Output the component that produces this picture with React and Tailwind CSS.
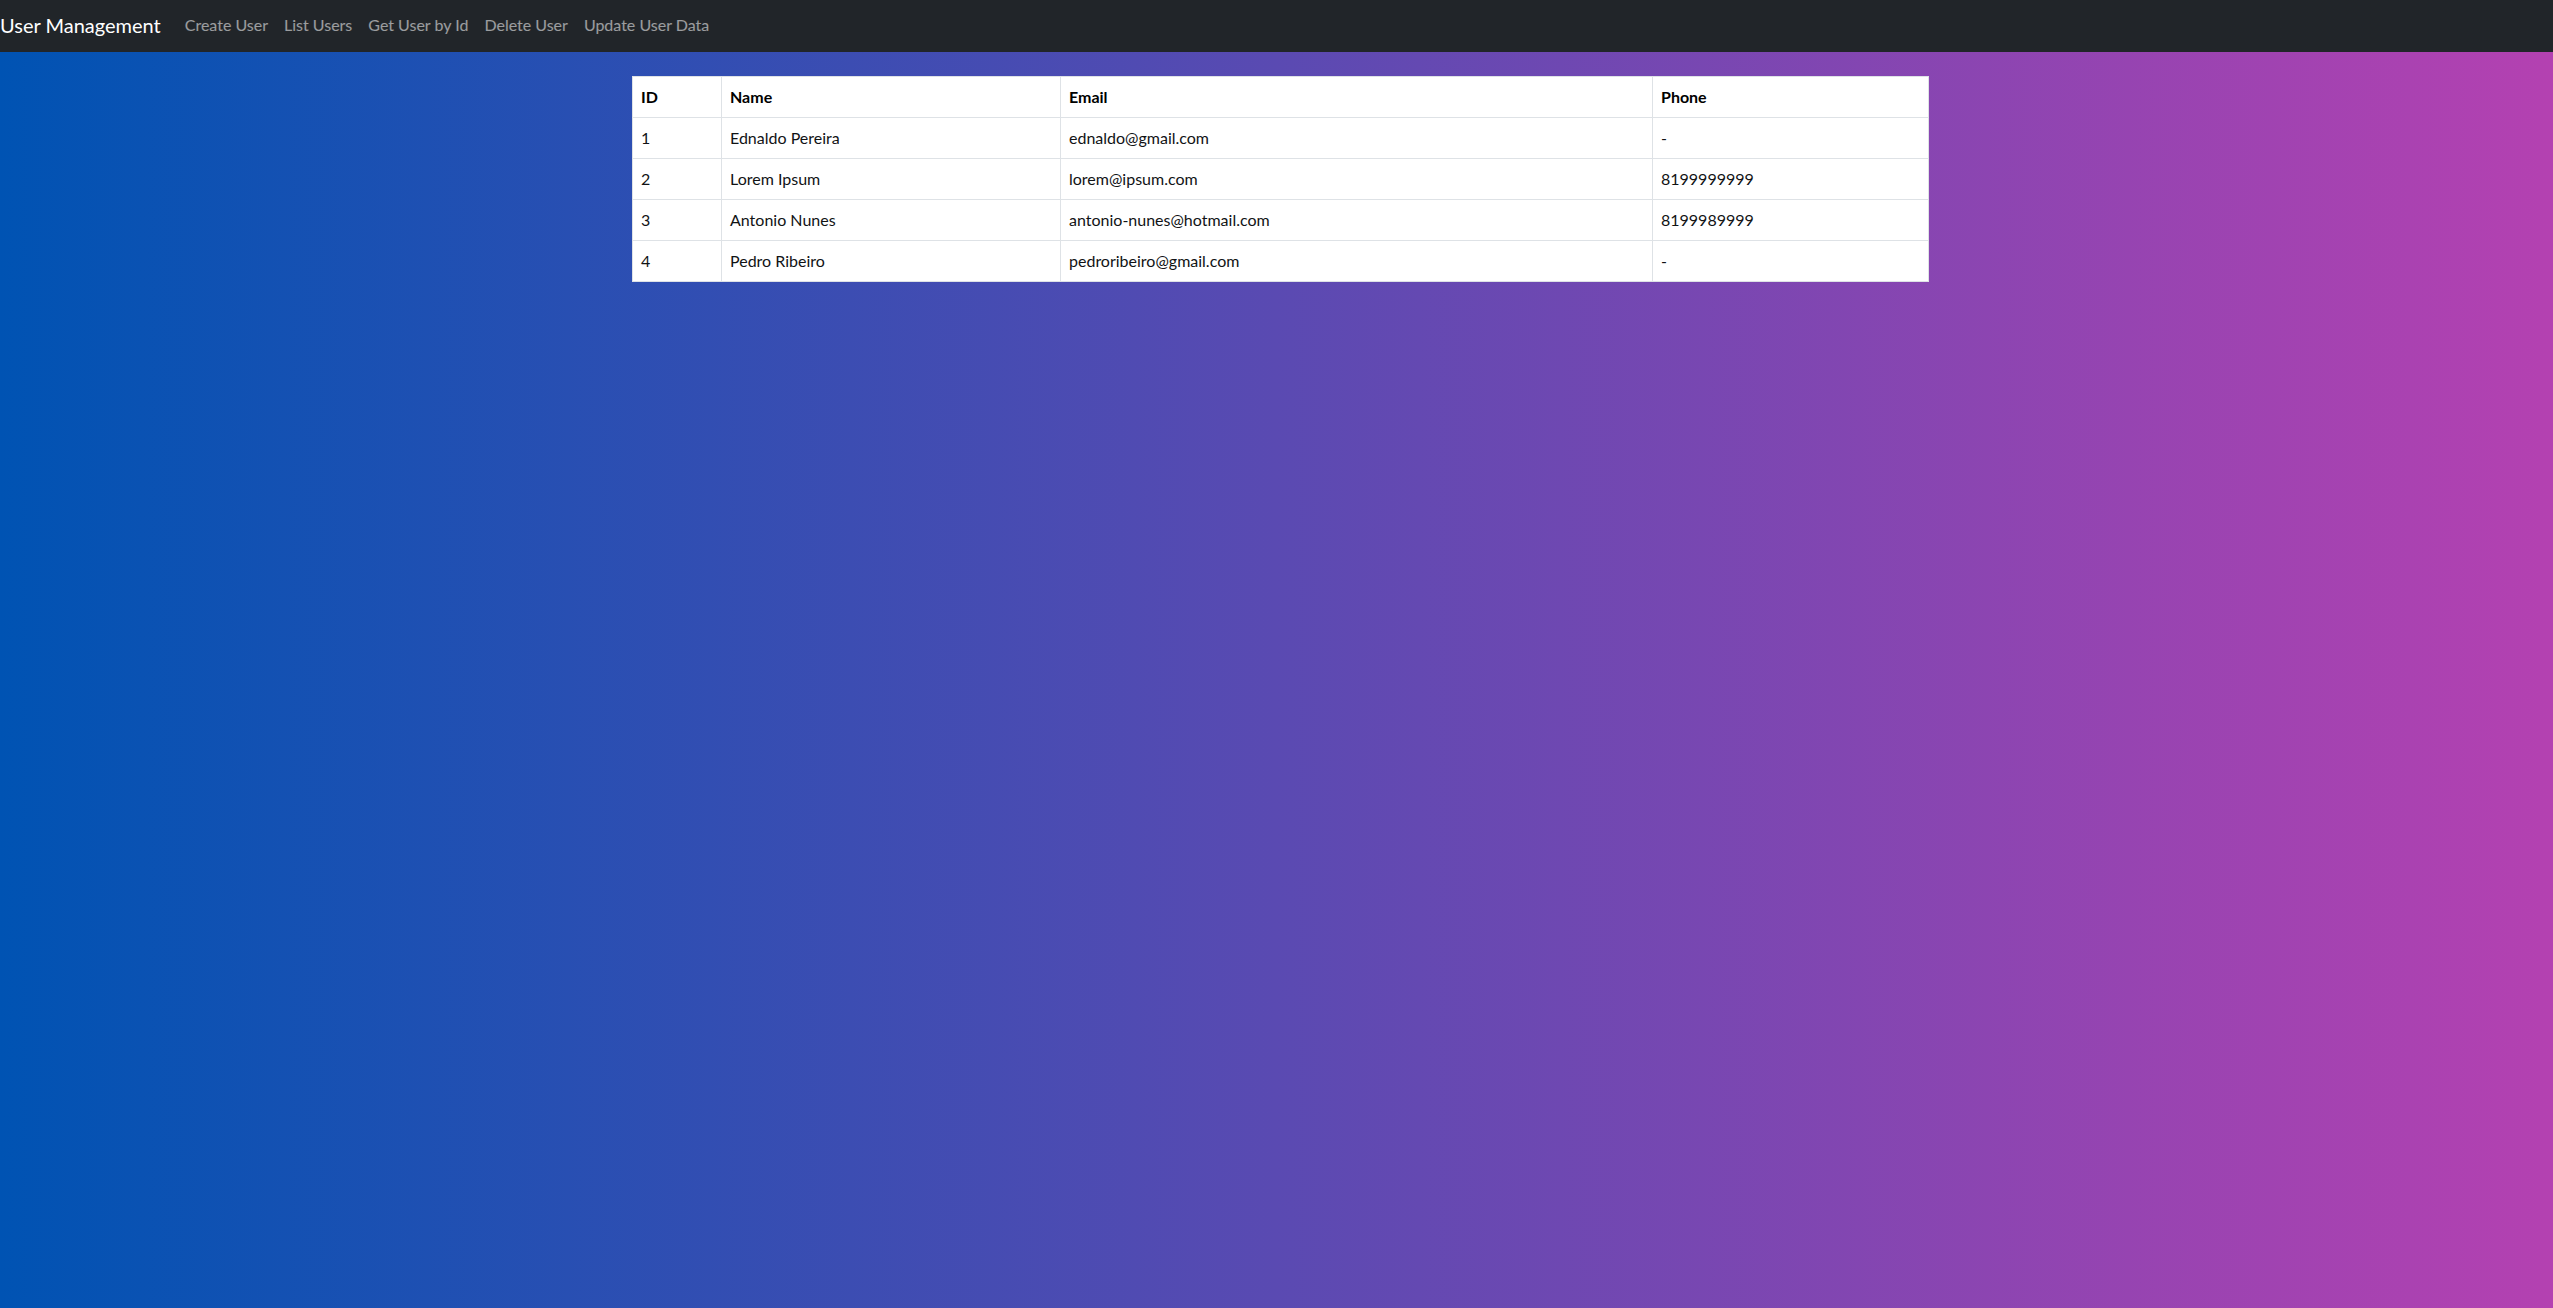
import React from 'react';

const links = ['Create User', 'List Users', 'Get User by Id', 'Delete User', 'Update User Data'];

const users = [
  { id: 1, name: 'Ednaldo Pereira', email: 'ednaldo@gmail.com', phone: '-' },
  { id: 2, name: 'Lorem Ipsum', email: 'lorem@ipsum.com', phone: '8199999999' },
  { id: 3, name: 'Antonio Nunes', email: 'antonio-nunes@hotmail.com', phone: '8199989999' },
  { id: 4, name: 'Pedro Ribeiro', email: 'pedroribeiro@gmail.com', phone: '-' },
];

const cell = 'border border-[#dee2e6] px-2 py-2 leading-6 text-left align-top';

const App = () => {
  return (
    <div className="min-h-screen flex flex-col bg-linear-to-r/srgb from-[#0053b3] to-[#b441b1] font-['Lato',sans-serif] text-[#111315]">
      {/* Navbar */}
      <nav className="h-[52px] bg-[#212529] flex items-center pb-[3px]">
        <span className="text-white text-[20px] mr-4 leading-[30px]">User Management</span>
        <ul className="flex">
          {links.map((l) => (
            <li key={l}>
              <a href="#" className="block px-2 text-[16px] leading-6 text-white/55">
                {l}
              </a>
            </li>
          ))}
        </ul>
      </nav>

      <div className="w-[1303px] mx-auto mt-6 pl-[7px]">
        <table className="w-full border-collapse bg-white text-[16px] table-fixed">
          <colgroup>
            <col className="w-[89px]" />
            <col className="w-[339px]" />
            <col className="w-[592px]" />
            <col className="w-[276px]" />
          </colgroup>
          <thead>
            <tr>
              <th className={`${cell} font-bold text-black`}>ID</th>
              <th className={`${cell} font-bold text-black`}>Name</th>
              <th className={`${cell} font-bold text-black`}>Email</th>
              <th className={`${cell} font-bold text-black`}>Phone</th>
            </tr>
          </thead>
          <tbody>
            {users.map((u) => (
              <tr key={u.id}>
                <td className={cell}>{u.id}</td>
                <td className={cell}>{u.name}</td>
                <td className={cell}>{u.email}</td>
                <td className={cell}>{u.phone}</td>
              </tr>
            ))}
          </tbody>
        </table>
      </div>
    </div>
  );
};

export default App;
